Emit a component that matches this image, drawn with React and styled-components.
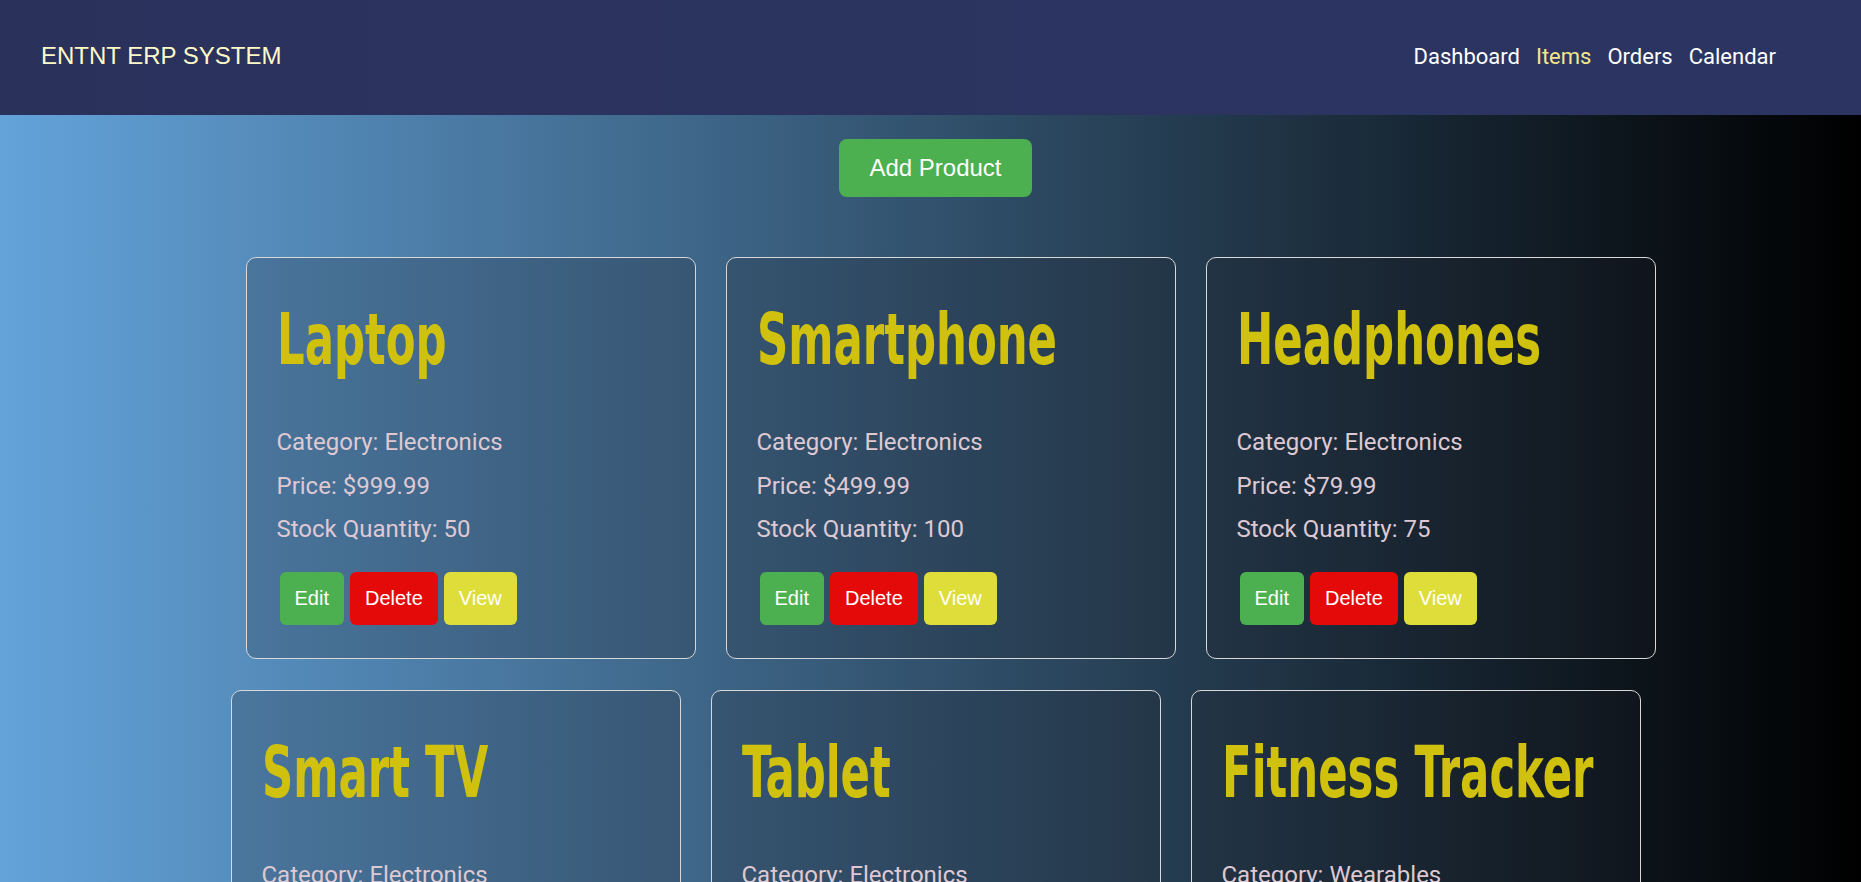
import React from "react";
import styled, { createGlobalStyle } from "styled-components";

const GlobalStyle = createGlobalStyle`
  html, body {
    margin: 0;
    padding: 0;
    min-height: 100%;
  }
  body {
    background: linear-gradient(to right, #63a3da, #000000);
    font-family: "Liberation Sans", Arial, sans-serif;
    min-height: 100vh;
  }
`;

const Header = styled.header`
  height: 115px;
  box-sizing: border-box;
  display: flex;
  justify-content: space-between;
  align-items: flex-start;
  padding: 0 85px 0 41px;
  background: linear-gradient(to right, #2a325c, #2c3562);
`;

const Logo = styled.div`
  margin-top: 42px;
  font-family: "Liberation Sans", Arial, sans-serif;
  font-size: 24px;
  color: #fffac8;
`;

const Nav = styled.nav`
  margin-top: 44px;
  display: flex;
  gap: 16px;
`;

const NavLink = styled.a`
  font-family: Roboto, "Noto Sans", sans-serif;
  font-size: 22px;
  color: ${(p) => (p.$active ? "#f2e68c" : "#ffffff")};
  text-decoration: none;
  cursor: pointer;
`;

const Main = styled.main`
  display: flex;
  flex-direction: column;
  align-items: center;
  padding: 24px 0 40px 10px;
`;

const AddButton = styled.button`
  background: #4caf50;
  color: #ffffff;
  border: none;
  border-radius: 8px;
  padding: 15px 30px;
  font-family: "Liberation Sans", Arial, sans-serif;
  font-size: 24px;
  cursor: pointer;
`;

const CardGrid = styled.div`
  margin-top: 60px;
  display: flex;
  flex-direction: column;
  align-items: center;
  gap: 31px;
`;

const CardRow = styled.div`
  display: flex;
  gap: 30px;
  padding-left: ${(p) => p.$shift || 0}px;
`;

const Card = styled.div`
  width: 450px;
  box-sizing: border-box;
  padding: 30px;
  border: 1px solid #d8d8d8;
  border-radius: 10px;
  background: rgba(30, 30, 40, 0.22);
`;

const Title = styled.h2`
  margin: 11px 0 0;
  font-family: "DejaVu Sans Condensed", "Liberation Sans", sans-serif;
  font-weight: bold;
  font-size: 72px;
  line-height: 80px;
  color: #cfc10d;
  white-space: nowrap;
  transform: scaleX(0.67);
  transform-origin: left center;
`;

const Details = styled.div`
  margin-top: 49px;
  display: flex;
  flex-direction: column;
  gap: 15.5px;
`;

const Info = styled.p`
  margin: 0;
  font-family: Roboto, "Noto Sans", sans-serif;
  font-size: 24px;
  line-height: 28px;
  color: #dec9d3;
`;

const Actions = styled.div`
  margin-top: 26px;
  display: flex;
`;

const ActionButton = styled.button`
  margin: 3px;
  padding: 15px;
  border: none;
  border-radius: 6px;
  font-family: "Liberation Sans", Arial, sans-serif;
  font-size: 20px;
  line-height: 23px;
  color: #ffffff;
  cursor: pointer;
  background: ${(p) =>
    p.$variant === "delete" ? "#e50a0a" : p.$variant === "view" ? "#dedd3a" : "#4caf50"};
`;

const products = [
  { name: "Laptop", category: "Electronics", price: "999.99", stock: 50 },
  { name: "Smartphone", category: "Electronics", price: "499.99", stock: 100 },
  { name: "Headphones", category: "Electronics", price: "79.99", stock: 75 },
  { name: "Smart TV", category: "Electronics", price: "799.99", stock: 30 },
  { name: "Tablet", category: "Electronics", price: "299.99", stock: 60 },
  { name: "Fitness Tracker", category: "Wearables", price: "129.99", stock: 40 },
];

function ProductCard({ p }) {
  return (
    <Card>
      <Title>{p.name}</Title>
      <Details>
        <Info>Category: {p.category}</Info>
        <Info>Price: ${p.price}</Info>
        <Info>Stock Quantity: {p.stock}</Info>
      </Details>
      <Actions>
        <ActionButton $variant="edit">Edit</ActionButton>
        <ActionButton $variant="delete">Delete</ActionButton>
        <ActionButton $variant="view">View</ActionButton>
      </Actions>
    </Card>
  );
}

export default function App() {
  return (
    <>
      <GlobalStyle />
      <Header>
        <Logo>ENTNT ERP SYSTEM</Logo>
        <Nav>
          <NavLink>Dashboard</NavLink>
          <NavLink $active>Items</NavLink>
          <NavLink>Orders</NavLink>
          <NavLink>Calendar</NavLink>
        </Nav>
      </Header>
      <Main>
        <AddButton>Add Product</AddButton>
        <CardGrid>
          <CardRow $shift={30}>
            {products.slice(0, 3).map((p) => (
              <ProductCard key={p.name} p={p} />
            ))}
          </CardRow>
          <CardRow>
            {products.slice(3).map((p) => (
              <ProductCard key={p.name} p={p} />
            ))}
          </CardRow>
        </CardGrid>
      </Main>
    </>
  );
}
